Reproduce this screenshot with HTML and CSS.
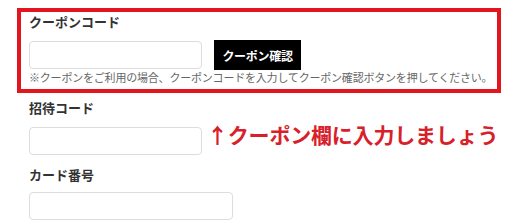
FILE: index.html
```html
<!DOCTYPE html>
<html>
<head>
<meta charset="utf-8">
<title>クーポン入力</title>
<link rel="stylesheet" href="styles.css">
</head>
<body>

<div class="cpn_box">
<div class="frm_lbl">クーポンコード</div>
<div class="frm_row cpn_row">
<input type="text" class="frm_inp" name="coupon_code" />
<button type="button" class="cpn_btn">クーポン確認</button>
</div>
<div class="cpn_note">※クーポンをご利用の場合、クーポンコードを入力してクーポン確認ボタンを押してください。</div>
</div>

<div class="frm_grp">
<div class="frm_lbl">招待コード</div>
<div class="frm_row">
<input type="text" class="frm_inp" name="invite_code" />
<span class="cpn_hint">↑クーポン欄に入力しましょう</span>
</div>
</div>

<div class="frm_grp">
<div class="frm_lbl">カード番号</div>
<div class="frm_row">
<input type="text" class="frm_inp frm_inp_wide" name="card_no" />
</div>
</div>

</body>
</html>
```

FILE: styles.css
```css
body {margin:0;padding-top:8px;background:#fff;color:#333;font-family:"Noto Sans CJK JP", sans-serif;}

.cpn_box {margin-left:17px;width:484px;box-sizing:border-box;border:4px solid #e3161f;padding:2px 8px 4px;}

.frm_lbl {font-size:13px;line-height:16px;font-weight:bold;color:#333;}

.frm_row {display:flex;align-items:center;}
.cpn_row {margin-top:10px;}

.frm_inp {width:173px;height:28px;box-sizing:border-box;border:1px solid #ddd;border-radius:4px;background:#fff;margin:0;padding:0 6px;}
.frm_inp_wide {width:204px;}

.cpn_btn {width:87px;height:30px;box-sizing:border-box;margin:0 0 0 12px;padding:0;border:0;background:#000;color:#fff;font-family:inherit;font-size:12px;font-weight:bold;white-space:nowrap;letter-spacing:-0.3px;}

.cpn_note {font-size:11px;line-height:15px;color:#666;letter-spacing:-0.2px;white-space:nowrap;}

.frm_grp {padding-left:29px;}
.frm_grp .frm_lbl {margin-top:6px;line-height:18px;}
.frm_grp .frm_row {margin-top:10px;}
.frm_grp + .frm_grp .frm_lbl {margin-top:11px;}
.frm_grp + .frm_grp .frm_row {margin-top:8px;}

.cpn_hint {margin-left:5px;margin-top:-14px;font-size:21px;line-height:24px;font-weight:bold;color:#d8202a;letter-spacing:-0.2px;}
```
